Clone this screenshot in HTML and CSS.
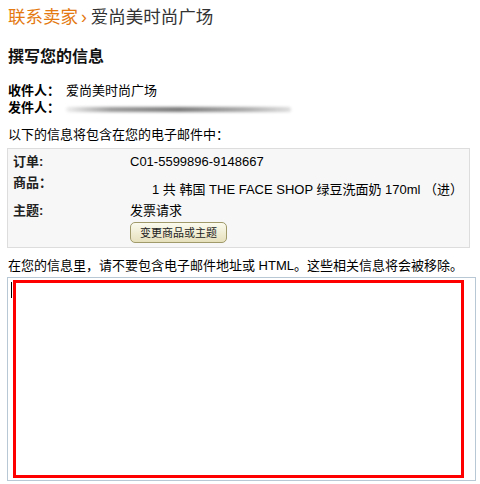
FILE: index.html
```html
<!DOCTYPE html>
<html lang="zh-CN">
<head>
  <meta charset="utf-8">
  <title>联系卖家</title>
  <link rel="stylesheet" href="styles.css">
</head>
<body>

  <!-- breadcrumb -->
  <div class="crumb">
    <a href="#">联系卖家</a><span class="sep">›</span><span class="shop">爱尚美时尚广场</span>
  </div>

  <h2>撰写您的信息</h2>

  <div class="people">
    <div class="person"><b>收件人：</b><span>爱尚美时尚广场</span></div>
    <div class="person"><b>发件人：</b><span class="blur"></span></div>
  </div>

  <p class="note">以下的信息将包含在您的电子邮件中：</p>

  <div class="info-box">
    <div class="row">
      <div class="label">订单:</div>
      <div class="value">C01-5599896-9148667</div>
    </div>
    <div class="row">
      <div class="label">商品：</div>
      <div class="value item">1 共 韩国 THE FACE SHOP 绿豆洗面奶 170ml （进）</div>
    </div>
    <div class="row">
      <div class="label">主题:</div>
      <div class="value">
        发票请求
        <div><button class="change-btn">变更商品或主题</button></div>
      </div>
    </div>
  </div>

  <p class="note">在您的信息里，请不要包含电子邮件地址或 HTML。这些相关信息将会被移除。</p>

  <div class="message">
    <span class="caret"></span>
    <div class="mark"></div>
  </div>

</body>
</html>
```

FILE: styles.css
```css
body {
  font-family: "Liberation Sans", "Noto Sans CJK SC", sans-serif;
  font-size: 13px;
  color: #000;
  margin: 0;
  padding: 4px 4px 0 8px;
  background: #fff;
}

.crumb {
  font-size: 17.5px;
  line-height: 26px;
  color: #333;
}

.crumb a {
  color: #e47911;
  text-decoration: none;
}

.crumb .sep {
  color: #e47911;
  margin: 0 4px 0 3px;
}

h2 {
  font-size: 16px;
  margin: 17px 0 15px;
  line-height: 20px;
  color: #111;
}

.people {
  line-height: 17px;
}

.person {
  display: flex;
  align-items: center;
}

.person b {
  width: 58px;
}

.blur {
  display: inline-block;
  width: 225px;
  height: 5px;
  margin-top: 3px;
  border-radius: 3px;
  background: linear-gradient(90deg, #eee, #999 20%, #777 50%, #aaa 80%, #ddd);
  filter: blur(1.5px);
}

.note {
  margin: 11px 0 5px;
  line-height: 16px;
}

.info-box {
  width: 451px;
  border: 1px solid #ddd;
  background: #f7f7f7;
  padding: 2px 5px 4px;
  margin-left: -1px;
}

.row {
  display: flex;
  line-height: 21px;
}

.label {
  width: 117px;
  font-weight: bold;
  color: #222;
}

.value.item {
  padding: 7px 0 0 22px;
}

.change-btn {
  font-family: "Noto Sans CJK SC", sans-serif;
  font-size: 11px;
  line-height: 15px;
  padding: 2px 9px;
  margin: 1px 0 0;
  border: 1px solid #a09a6a;
  border-radius: 5px;
  background: linear-gradient(#fbfbee, #e6e0bc);
  color: #222;
}

.info-box + .note {
  margin-top: 10px;
  margin-bottom: 3px;
}

.message {
  position: relative;
  height: 202px;
  margin-left: -1px;
  border: 1px solid #b8c8d4;
}

.caret {
  position: absolute;
  left: 3px;
  top: 4px;
  width: 1px;
  height: 16px;
  background: #000;
}

.mark {
  position: absolute;
  left: 5px;
  top: 2px;
  width: 445px;
  height: 192px;
  border: 3px solid #ff0000;
}
```
